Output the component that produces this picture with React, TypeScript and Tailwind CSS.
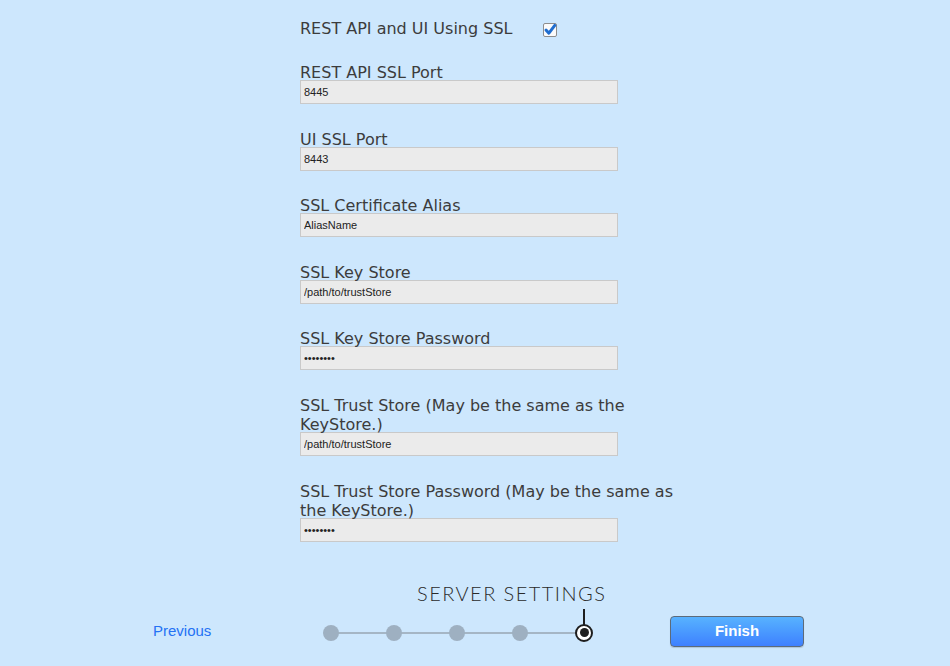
import { useState } from "react";

type Field = {
  label: string;
  value: string;
  password?: boolean;
};

const fields: Field[] = [
  { label: "REST API SSL Port", value: "8445" },
  { label: "UI SSL Port", value: "8443" },
  { label: "SSL Certificate Alias", value: "AliasName" },
  { label: "SSL Key Store", value: "/path/to/trustStore" },
  { label: "SSL Key Store Password", value: "password", password: true },
  {
    label: "SSL Trust Store (May be the same as the KeyStore.)",
    value: "/path/to/trustStore",
  },
  {
    label: "SSL Trust Store Password (May be the same as the KeyStore.)",
    value: "password",
    password: true,
  },
];

function CheckBox({ checked, onClick }: { checked: boolean; onClick: () => void }) {
  return (
    <button onClick={onClick} className="ml-[31px] mt-[2px] h-[14px] w-[14px]">
      <svg width="14" height="14" viewBox="0 0 14 14">
        <rect x="0.5" y="0.5" width="13" height="13" rx="1.5" fill="#fbfbfb" stroke="#8d8d8d" />
        {checked && (
          <path
            d="M3 7 L5.9 10.2 L11.8 2.4"
            fill="none"
            stroke="#1f6dcf"
            strokeWidth="3"
            strokeLinecap="round"
            strokeLinejoin="round"
          />
        )}
      </svg>
    </button>
  );
}

export default function App() {
  const [useSsl, setUseSsl] = useState(true);
  const [values, setValues] = useState(fields.map((f) => f.value));

  return (
    <div className="h-[666px] w-[950px] overflow-hidden bg-[#cde7fd] font-['DejaVu_Sans',Verdana,sans-serif] text-[#3c3c3c]">
      {/* Form */}
      <div className="ml-[300px] w-[380px] pt-[18px]">
        <div className="flex h-[20px] translate-y-[1px] items-center text-[16px] leading-[20px]">
          <span>REST API and UI Using SSL</span>
          <CheckBox checked={useSsl} onClick={() => setUseSsl(!useSsl)} />
        </div>

        <div className="mt-[23px] flex flex-col gap-[23.6px]">
          {fields.map((field, i) => (
            <label key={field.label} className="block">
              <span className="block translate-y-[1.5px] text-[16px] leading-[19px]">
                {field.label}
              </span>
              <input
                type={field.password ? "password" : "text"}
                value={values[i]}
                onChange={(e) =>
                  setValues(values.map((v, j) => (j === i ? e.target.value : v)))
                }
                className="block h-[24px] w-[318px] border border-[#c9c9c9] bg-[#ebebeb] px-[3px] font-['Liberation_Sans',Arial,sans-serif] text-[11px] text-[#222] outline-none"
              />
            </label>
          ))}
        </div>
      </div>

      {/* Step label */}
      <div className="mt-[41px] ml-[417px] h-[20px] font-['Lato',sans-serif] text-[20px] leading-[20px] font-light tracking-[1.45px] text-[#2a2a2a]">
        SERVER SETTINGS
      </div>

      {/* Footer */}
      <div className="mt-[9px] flex h-[40px] items-center font-['Liberation_Sans',Arial,sans-serif]">
        <button className="ml-[153px] w-[170px] text-left text-[15px] text-[#2472f4]">
          Previous
        </button>

        <div className="relative flex w-[270px] translate-y-[1px] items-center justify-between">
          <div className="absolute left-[8px] right-[9px] top-1/2 h-[2px] -translate-y-1/2 bg-[#a5b6c5]" />
          <span className="relative h-[16px] w-[16px] rounded-full bg-[#9eb0c1]" />
          <span className="relative h-[16px] w-[16px] rounded-full bg-[#9eb0c1]" />
          <span className="relative h-[16px] w-[16px] rounded-full bg-[#9eb0c1]" />
          <span className="relative h-[16px] w-[16px] rounded-full bg-[#9eb0c1]" />
          <span className="relative flex h-[18px] w-[18px] items-center justify-center rounded-full border-2 border-[#1e1e1e] bg-white">
            <span className="absolute bottom-full left-1/2 h-[17px] w-[2px] -translate-x-1/2 bg-[#1e1e1e]" />
            <span className="h-[9px] w-[9px] rounded-full bg-[#1e1e1e]" />
          </span>
        </div>

        <button className="ml-[77px] h-[31px] w-[134px] rounded-[4px] border border-[#5d6b7a] bg-gradient-to-b from-[#58b2ff] to-[#3f80ff] text-[15px] font-bold text-white shadow-[0_1px_1px_rgba(0,0,0,0.15)]">
          Finish
        </button>
      </div>
    </div>
  );
}
